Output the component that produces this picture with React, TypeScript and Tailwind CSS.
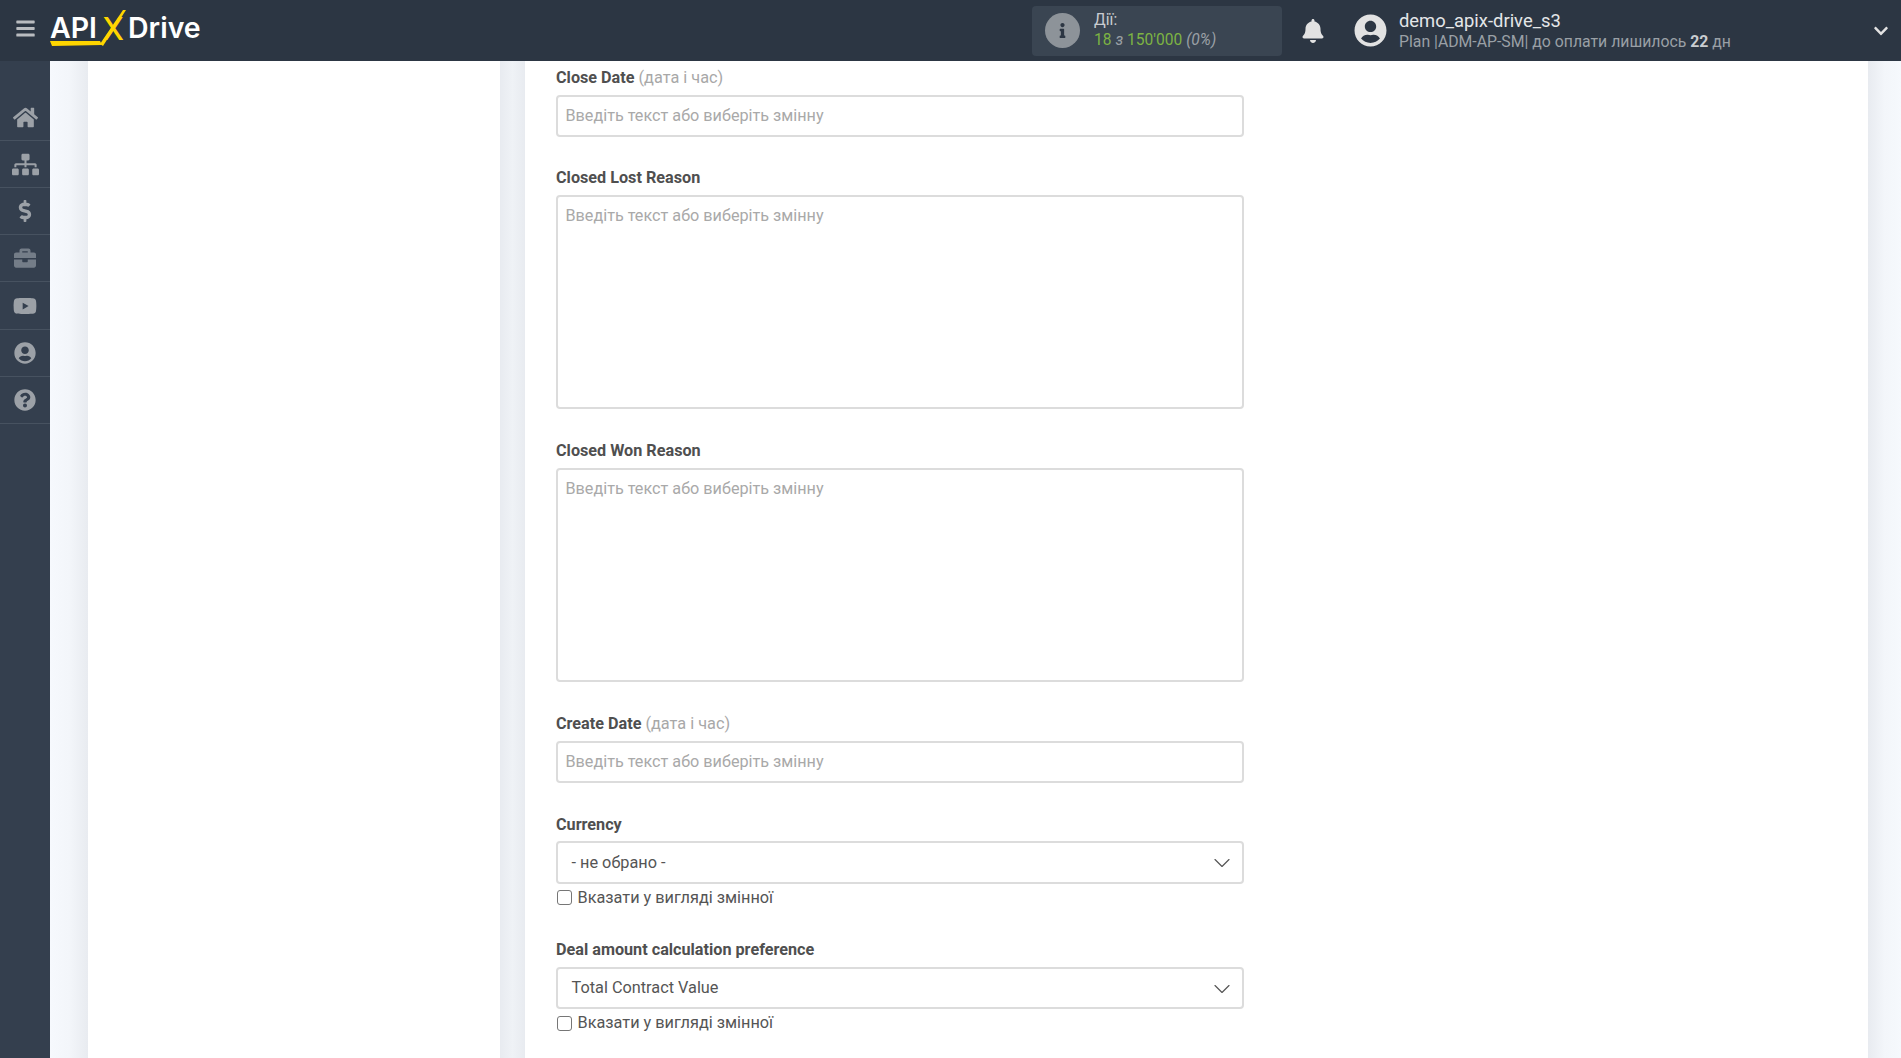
import { FaBars, FaHome, FaSitemap, FaDollarSign, FaBriefcase, FaYoutube, FaUserCircle, FaQuestionCircle, FaBell, FaInfo, FaChevronDown } from 'react-icons/fa'
import { ChevronDown } from 'lucide-react'

const roboto = { fontFamily: 'Roboto, sans-serif' }

function Label({ name, hint }: { name: string; hint?: string }) {
  return (
    <div className="h-[20px] leading-[22px] text-[16.2px] text-[#4f4f4f] mb-[7.5px]">
      <span className="font-bold">{name}</span>
      {hint && <span className="font-normal text-[#a8a8a8] text-[16.3px]"> {hint}</span>}
    </div>
  )
}

function TextInput() {
  return (
    <div className="h-[42.5px] border-2 border-[#dcdcdc] rounded-[4px] px-[7.5px] flex items-center text-[16.2px] text-[#a9a9a9] bg-white">
      Введіть текст або виберіть змінну
    </div>
  )
}

function TextArea() {
  return (
    <div className="h-[214.5px] border-2 border-[#dcdcdc] rounded-[4px] px-[7.5px] pt-[7.5px] leading-[24px] text-[16.2px] text-[#a9a9a9] bg-white">
      Введіть текст або виберіть змінну
    </div>
  )
}

function SelectBox({ value }: { value: string }) {
  return (
    <div>
      <div className="h-[42.5px] border-2 border-[#dcdcdc] rounded-[4px] pl-[13.5px] pr-[6px] flex items-center justify-between text-[16.3px] text-[#555555] bg-white">
        <span className="pt-[1px]">{value}</span>
        <ChevronDown size={28} strokeWidth={1} className="text-[#555555] mt-[2px] shrink-0" />
      </div>
      <label className="flex items-center h-[20px] mt-[4px] text-[16.3px] text-[#555555] leading-[20px]">
        <span className="w-[15px] h-[15px] border border-[#767676] rounded-[3px] bg-white ml-[1px] mr-[5.5px]" />
        Вказати у вигляді змінної
      </label>
    </div>
  )
}

const navItems = [
  { Icon: FaHome, size: 25, rowClass: 'h-[47px]', iconClass: 'text-[#9ca1a7]' },
  { Icon: FaSitemap, size: 27, rowClass: 'h-[47px]', iconClass: 'text-[#9ca1a7]' },
  { Icon: FaDollarSign, size: 22, rowClass: 'h-[47px]', iconClass: 'text-[#9ca1a7]' },
  { Icon: FaBriefcase, size: 22, rowClass: 'h-[47px]', iconClass: 'text-[#747d88]' },
  { Icon: FaYoutube, size: 24, rowClass: 'h-[48px]', iconClass: 'text-[#9ca1a7]' },
  { Icon: FaUserCircle, size: 22, rowClass: 'h-[47px]', iconClass: 'text-[#9ca1a7]' },
  { Icon: FaQuestionCircle, size: 22, rowClass: 'h-[47px]', iconClass: 'text-[#9ca1a7]' },
]

function Logo() {
  return (
    <div className="relative flex items-center h-[54px] text-[28.5px] font-semibold -mt-[5px] text-white" style={{ fontFamily: 'Inter, sans-serif' }}>
      <span>API</span>
      <span className="relative w-[26px] ml-[3px] mr-[2px] text-center text-[#ffd600] text-[31px] font-medium leading-none">
        X
        <svg className="absolute left-0 top-[-2.5px]" width="26" height="36" viewBox="0 0 26 36">
          <path d="M0 34 L23 0 L26 0 L3 36 Z" fill="#ffd600" />
        </svg>
      </span>
      <span>Drive</span>
      <svg className="absolute left-0 top-[40px]" width="52" height="5" viewBox="0 0 52 5">
        <path d="M0 0 L50 0 L52 4 L2 5 Z" fill="#ffd600" />
      </svg>
    </div>
  )
}

export default function App() {
  return (
    <div className="h-[1058px] w-full overflow-hidden flex flex-col bg-white" style={roboto}>
      {/* Header */}
      <header className="h-[61px] shrink-0 bg-[#2c3643] flex items-center text-white">
        <div className="w-[50px] flex justify-center -mt-[5px]">
          <FaBars size={21} className="text-[#b9bcc0]" />
        </div>
        <Logo />
        <div className="ml-auto w-[250px] h-[50px] rounded-[4px] bg-[#3a4552] flex items-center pl-[13px] mr-[17px]">
          <div className="w-[35px] h-[35px] rounded-full bg-[#8d9399] flex items-center justify-center">
            <FaInfo size={15} className="text-[#2c3643]" />
          </div>
          <div className="ml-[14px] text-[15.6px] leading-[20px] -mt-[2px]">
            <div className="text-[#c9ccd0]">Дії:</div>
            <div className="text-[#7db343]">18 <i className="text-[#9aa0a6]">з</i> 150'000 <i className="text-[#9aa0a6]">(0%)</i></div>
          </div>
        </div>
        <FaBell size={24} className="text-[#e2e2e2] mr-[29px] ml-[2px]" />
        <FaUserCircle size={33} className="text-[#e2e2e2]" />
        <div className="ml-[12px] w-[474px]">
          <div className="text-[18.4px] leading-[22px] mt-[1px] text-[#e4e6e8]">demo_apix-drive_s3</div>
          <div className="text-[15.8px] leading-[20px] text-[#9aa0a6]">
            Plan |ADM-AP-SM| до оплати лишилось <b className="text-[#c9ccd0]">22</b> дн
          </div>
        </div>
        <FaChevronDown size={16} className="text-[#e2e2e2] mr-[12px]" />
      </header>

      <div className="flex-1 flex min-h-0">
        {/* Sidebar */}
        <nav className="w-[50px] shrink-0 bg-[#343f4e] pt-[33px]">
          {navItems.map(({ Icon, size, rowClass, iconClass }, i) => (
            <div key={i} className={`${rowClass} border-b border-[#475260] flex items-center justify-center ${iconClass}`}>
              <Icon size={size} />
            </div>
          ))}
        </nav>

        {/* Content */}
        <main className="flex-1 min-w-0 flex">
          <div className="w-[38px] shrink-0 bg-gradient-to-r from-[#f6f9fd] via-[#f3f6fa] to-[#e8ebf0]" />
          <div className="w-[412px] bg-white shrink-0" />
          <div className="w-[25px] shrink-0 bg-gradient-to-r from-[#e8ebf0] via-[#eff2f6] to-[#e8ebf0]" />
          <div className="w-[1343px] bg-white shrink-0 pl-[31px] pt-[6px]">
            <div className="w-[687.5px]">
              <Label name="Close Date" hint="(дата і час)" />
              <TextInput />
              <div className="h-[30px]" />
              <Label name="Closed Lost Reason" />
              <TextArea />
              <div className="h-[31px]" />
              <Label name="Closed Won Reason" />
              <TextArea />
              <div className="h-[31px]" />
              <Label name="Create Date" hint="(дата і час)" />
              <TextInput />
              <div className="h-[30.5px]" />
              <Label name="Currency" />
              <SelectBox value="- не обрано -" />
              <div className="h-[31.5px]" />
              <Label name="Deal amount calculation preference" />
              <SelectBox value="Total Contract Value" />
            </div>
          </div>
          <div className="flex-1 bg-gradient-to-r from-[#e8ebf0] via-[#f3f6fa] to-[#f6f9fd]" />
        </main>
      </div>
    </div>
  )
}
